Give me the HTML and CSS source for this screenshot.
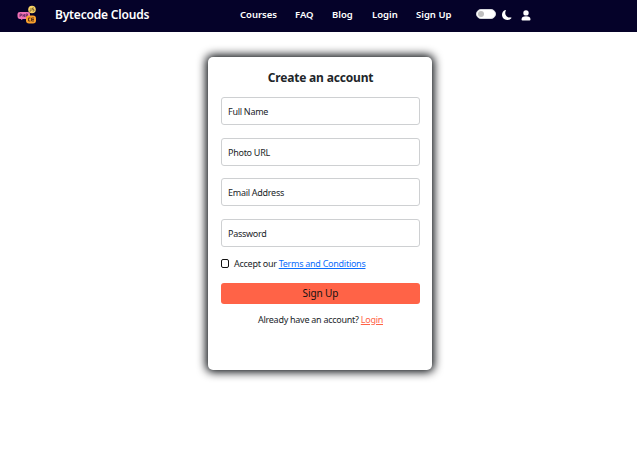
FILE: index.html
```html
<!DOCTYPE html>
<html lang="en">
<head>
<meta charset="utf-8">
<title>Bytecode Clouds</title>
<link rel="stylesheet" href="styles.css">
</head>
<body>
<header class="navbar">
  <svg class="logo" viewBox="0 0 20 20" aria-hidden="true">
    <path d="M3 7h8q2 0 2 2v2q0 3-2 3H6l-2 1v-1H3q-2.500 0-2.500-3V9q0-2 2.500-2z" fill="#ef70b5"/>
    <circle cx="15" cy="4.500" r="3.800" fill="#f8d264"/>
    <path d="M11 10.500h5q3 0 3 3v2q0 3-3 3h-4q-3 0-3-3v-2q0-3 2-3z" fill="#f9a02c"/>
    <path d="M3 12V9h1.500v1.500H3m3-1.500v3m0-1.500h1.500M7.500 9v3M9 12V9h1.500v1.500H9" stroke="#702e69" fill="none" stroke-width=".9"/>
    <path d="M14 3v3h-1.500M17 3h-1.500v1.500H17V6h-1.500" stroke="#6d592c" fill="none" stroke-width=".8"/>
    <path d="M13.500 13H11.500v3h2m3.500-3h-2.500v3H17m-3-1.500h3" stroke="#633918" fill="none" stroke-width="1"/>
  </svg>
  <a class="brand">Bytecode Clouds</a>
  <nav class="links">
    <a class="courses">Courses</a><a class="faq">FAQ</a><a class="blog">Blog</a><a class="login">Login</a><a class="signup">Sign Up</a>
  </nav>
  <span class="switch"></span>
  <svg class="moon" viewBox="0 0 16 16" aria-hidden="true"><path d="M6 .3a.8.800 0 0 1 .1.900 7.200 7.200 0 0 0-.900 3.500c0 4 3.300 7.300 7.300 7.300q.8 0 1.500-.2a.8.800 0 0 1 .9 1.200A8.300 8.300 0 0 1 8.300 16C3.700 16 0 12.300 0 7.700 0 4.300 2.100 1.300 5.100.100A.8.800 0 0 1 6 .3z" fill="#fff"/></svg>
  <svg class="person" viewBox="0 0 10 11" aria-hidden="true"><circle cx="5" cy="2.900" r="2.700" fill="#fff"/><path d="M1.500 10.500Q.5 10.500.5 9.500q0-3.200 4.500-3.200t4.500 3.200q0 1-1 1z" fill="#fff"/></svg>
</header>
<main class="card">
  <h1>Create an account</h1>
  <form>
    <div class="field name">Full Name</div>
    <div class="field photo">Photo URL</div>
    <div class="field email">Email Address</div>
    <div class="field password">Password</div>
    <label class="terms"><span class="check"></span><span>Accept our <a>Terms and Conditions</a></span></label>
    <button type="button"><span>Sign Up</span></button>
  </form>
  <p class="already">Already have an account? <a>Login</a></p>
</main>
</body>
</html>
```
FILE: styles.css
```css
* { box-sizing: border-box; }
body {
  margin: 0;
  height: 476px;
  background: #fff;
  color: #212529;
  font-family: "Noto Sans", sans-serif;
  font-size: 9px;
  letter-spacing: -.27px;
  overflow: hidden;
}
.navbar {
  display: flex;
  align-items: center;
  height: 32px;
  padding: 0 0 2px 17px;
  background: #050229;
  color: #fff;
}
.logo { width: 20px; height: 20px; flex: none; }
.brand {
  width: 185px;
  margin-left: 18px;
  padding-bottom: 2px;
  font-size: 12px;
  font-weight: 600;
  letter-spacing: -.18px;
  white-space: nowrap;
}
.links {
  display: flex;
  width: 236px;
  padding-bottom: 2px;
  font-size: 9.500px;
  font-weight: 600;
  letter-spacing: 0;
  white-space: nowrap;
}
.courses { width: 55px; }
.faq { width: 37px; }
.blog { width: 40px; }
.login { width: 44px; }
.switch {
  width: 20px;
  height: 10px;
  padding: 1px;
  border: 1px solid #d5d7dc;
  border-radius: 5px;
  background: #fff;
  margin-top: -2px;
}
.switch::before {
  content: "";
  display: block;
  width: 6px;
  height: 6px;
  border-radius: 50%;
  background: #bfbfbf;
}
.moon { width: 10px; height: 10px; margin-left: 6px; }
.person { width: 10px; height: 11px; margin-left: 9px; }
.card {
  width: 224px;
  height: 313px;
  margin: 25px 0 0 208px;
  padding: 11px 12px 0 13px;
  border-radius: 5px;
  background: #fff;
  box-shadow: 0 0 10px 2px #000408;
}
h1 {
  margin: 0;
  font-size: 12px;
  line-height: 19px;
  font-weight: 700;
  letter-spacing: -.18px;
  text-align: center;
  white-space: nowrap;
}
form { padding-top: 10px; }
.field {
  height: 28px;
  margin-bottom: 12.670px;
  padding: 1px 6px 0;
  border: 1px solid #ced0d2;
  border-radius: 3px;
  line-height: 25px;
}
.terms {
  display: flex;
  align-items: center;
  height: 12px;
  margin-top: -2px;
  white-space: nowrap;
}
.check {
  width: 8px;
  height: 9px;
  margin-right: 5px;
  border: 1px solid #111;
  border-radius: 2px;
}
.terms a { color: #0d6efd; text-decoration: underline; }
button {
  display: block;
  width: 199px;
  height: 21px;
  margin-top: 13px;
  padding: 0;
  border: 0;
  border-radius: 3px;
  background: #ff6347;
  color: #111;
  font: 10px/21px "Noto Sans", sans-serif;
  letter-spacing: -.1px;
}
.already {
  margin: 10px 0 0;
  line-height: 12px;
  text-align: center;
  white-space: nowrap;
}
.already a { color: #ff6347; text-decoration: underline; }
```
